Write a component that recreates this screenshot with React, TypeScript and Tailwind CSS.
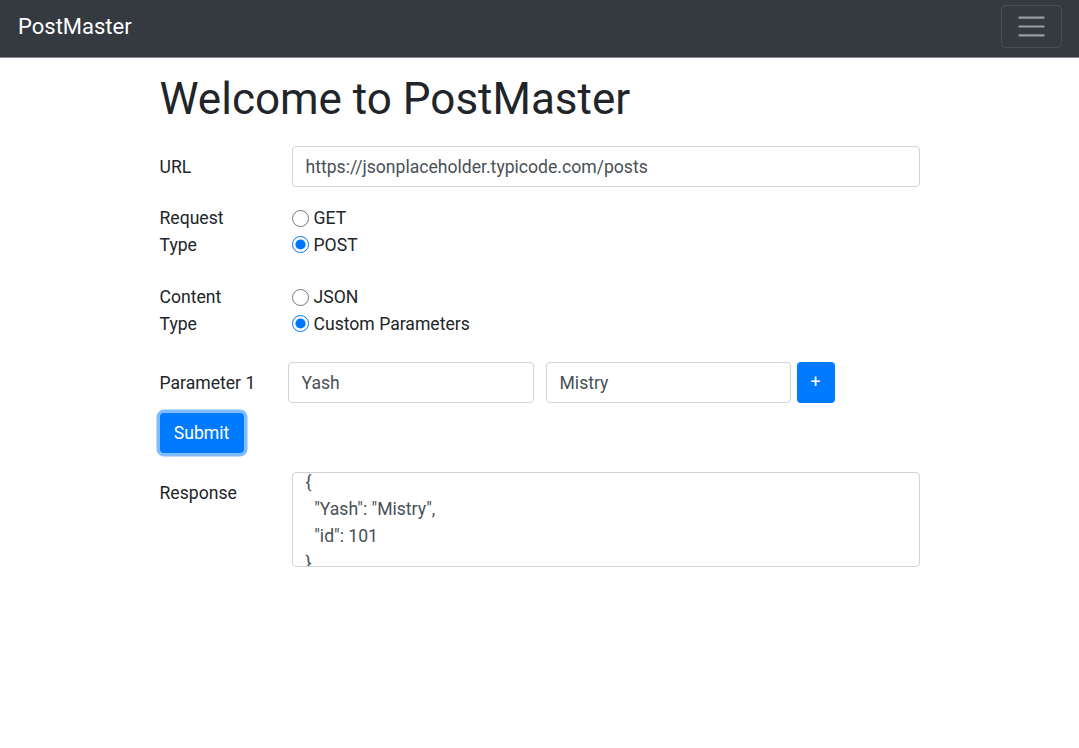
import React from "react";

const inputClass =
  "h-[41px] rounded-[4px] border border-[#ced4da] bg-white px-[13px] text-[17.6px] text-[#495057] outline-none";

function Radio({ label, checked }: { label: string; checked?: boolean }) {
  return (
    <label className="flex h-[26.5px] items-center gap-[5px]">
      <input
        type="radio"
        defaultChecked={checked}
        className="m-0 h-[17px] w-[17px] accent-[#0075ff]"
      />
      <span>{label}</span>
    </label>
  );
}

export default function App() {
  return (
    <div className="min-h-[748px] bg-white font-['Roboto',sans-serif] text-[17.6px] text-[#212529]">
      <nav className="flex h-[58px] items-center justify-between border-b border-[#8d9195] bg-[#343a40] pb-[5px] pl-[18px] pr-[17px]">
        <a href="#" className="text-[22px] leading-[33px] text-white">
          PostMaster
        </a>
        <button className="flex h-[43px] w-[61px] items-center justify-center rounded-[5px] border border-white/10">
          <svg width="33" height="33" viewBox="0 0 30 30">
            <path
              stroke="rgba(255,255,255,0.5)"
              strokeWidth="2"
              strokeLinecap="round"
              d="M4 7h22M4 15h22M4 23h22"
            />
          </svg>
        </button>
      </nav>

      <div className="mx-auto w-[760px]">
        <h1 className="mt-[15px] text-[44px] leading-[53px] font-normal">
          Welcome to PostMaster
        </h1>

        <div className="mt-[20px] flex items-center">
          <div className="w-[132px] pt-[1px]">URL</div>
          <input
            className={inputClass + " flex-1"}
            defaultValue="https://jsonplaceholder.typicode.com/posts"
          />
        </div>

        <div className="mt-[18px] flex leading-[26.5px]">
          <div className="w-[132px]">
            Request
            <br />
            Type
          </div>
          <div>
            <Radio label="GET" />
            <Radio label="POST" checked />
          </div>
        </div>

        <div className="mt-[26px] flex leading-[26.5px]">
          <div className="w-[132px]">
            Content
            <br />
            Type
          </div>
          <div>
            <Radio label="JSON" />
            <Radio label="Custom Parameters" checked />
          </div>
        </div>

        <div className="mt-[25px] flex items-center">
          <div className="w-[128px] pt-[1px]">Parameter 1</div>
          <input className={inputClass + " w-[246px]"} defaultValue="Yash" />
          <input
            className={inputClass + " ml-[12px] w-[245px]"}
            defaultValue="Mistry"
          />
          <button className="ml-[6px] h-[41px] w-[38px] rounded-[4px] bg-[#007bff] text-white">
            +
          </button>
        </div>

        <button className="mt-[10px] h-[40px] w-[84px] rounded-[4px] bg-[#007bff] text-white shadow-[0_0_0_3.5px_rgba(0,123,255,0.5)]">
          Submit
        </button>

        <div className="mt-[19px] flex items-start">
          <div className="w-[132px] pt-[8px] leading-[26.5px]">Response</div>
          <div className="h-[95px] flex-1 overflow-hidden rounded-[4px] border border-[#ced4da] px-[13px] text-[#495057]">
            <div className="-mt-[4px] whitespace-pre leading-[27px]">
              {'{\n  "Yash": "Mistry",\n  "id": 101\n}'}
            </div>
          </div>
        </div>
      </div>
    </div>
  );
}
